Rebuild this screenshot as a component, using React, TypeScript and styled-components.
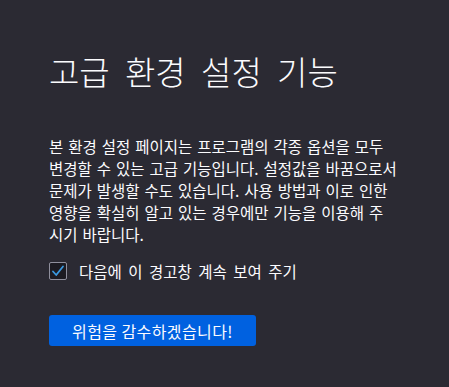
import React, { useState } from 'react'
import styled, { createGlobalStyle } from 'styled-components'

const GlobalStyle = createGlobalStyle`
  html, body {
    margin: 0;
    padding: 0;
    background: #2b2a33;
  }
  body {
    font-family: "Noto Sans CJK KR", "Noto Sans", sans-serif;
    color: #fbfbfe;
  }
`

const Page = styled.main`
  min-height: 387px;
  box-sizing: border-box;
  padding: 47px 20px 0 49px;
`

const Title = styled.h1`
  margin: 0 0 40px;
  font-size: 33px;
  font-weight: 300;
  line-height: 48px;
  word-spacing: 8px;
`

const Description = styled.p`
  margin: 0 0 15px;
  font-size: 15.5px;
  line-height: 22px;
  word-spacing: 1.5px;
  white-space: nowrap;
`

const CheckRow = styled.label`
  display: flex;
  align-items: center;
  gap: 12px;
  font-size: 15.5px;
  line-height: 22px;
  word-spacing: 3px;
  cursor: pointer;
  margin-bottom: 33px;
`

const Box = styled.span<{ checked: boolean }>`
  width: 18px;
  height: 18px;
  flex: none;
  box-sizing: border-box;
  border: 1px solid #8f8f9d;
  border-radius: 2px;
  background: #1c1b22;
  display: flex;
  align-items: center;
  justify-content: center;
  svg {
    visibility: ${({ checked }) => (checked ? 'visible' : 'hidden')};
  }
`

const HiddenInput = styled.input`
  display: none;
`

const Button = styled.button`
  height: 31px;
  padding: 0 20px;
  min-width: 207px;
  border: none;
  border-radius: 3px;
  background: #0061e0;
  color: #fbfbfe;
  font-family: inherit;
  font-size: 16px;
  letter-spacing: 0.4px;
  cursor: pointer;
`

const App: React.FC = () => {
  const [checked, setChecked] = useState(true)

  return (
    <>
      <GlobalStyle />
      <Page>
        <Title>고급 환경 설정 기능</Title>
        <Description>
          본 환경 설정 페이지는 프로그램의 각종 옵션을 모두<br />
          변경할 수 있는 고급 기능입니다. 설정값을 바꿈으로서<br />
          문제가 발생할 수도 있습니다. 사용 방법과 이로 인한<br />
          영향을 확실히 알고 있는 경우에만 기능을 이용해 주<br />
          시기 바랍니다.
        </Description>
        <CheckRow>
          <HiddenInput
            type='checkbox'
            checked={checked}
            onChange={() => setChecked(!checked)}
          />
          <Box checked={checked}>
            <svg width='14' height='14' viewBox='0 0 14 14'>
              <path
                d='M2 7.5 L5.2 11 L12 2.5'
                fill='none'
                stroke='#3a99e0'
                strokeWidth='1.8'
                strokeLinecap='round'
                strokeLinejoin='round'
              />
            </svg>
          </Box>
          다음에 이 경고창 계속 보여 주기
        </CheckRow>
        <Button>위험을 감수하겠습니다!</Button>
      </Page>
    </>
  )
}

export default App
